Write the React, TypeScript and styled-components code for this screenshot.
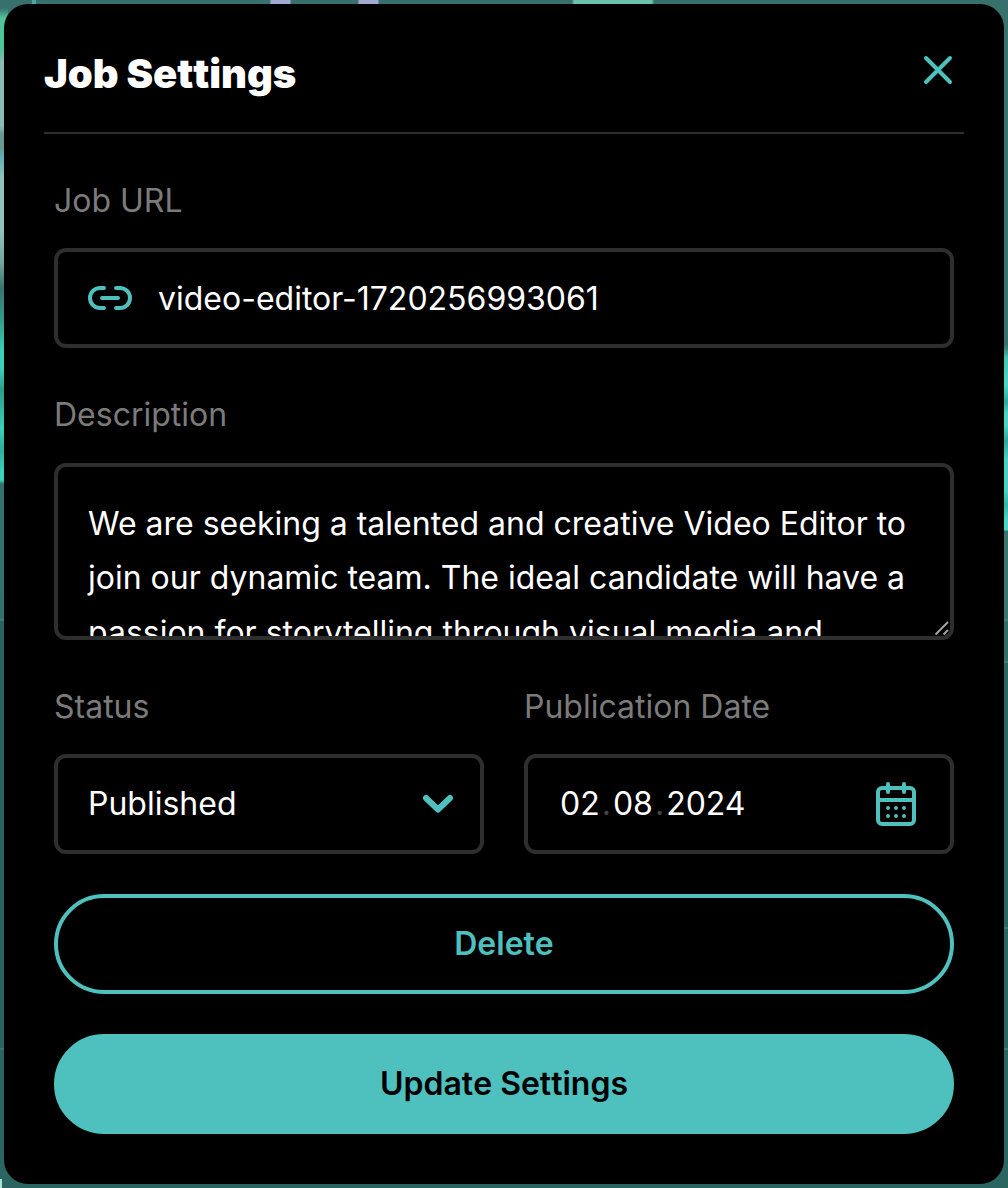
import React from "react";
import styled, { createGlobalStyle, css } from "styled-components";

const teal = "#4ec0be";
const line = "#2e2e2e";

const GlobalStyle = createGlobalStyle`
  *, *::before, *::after { box-sizing: border-box; }
  body { margin: 0; background: #2b6663; font-family: Inter, "Liberation Sans", sans-serif; }
`;

const Backdrop = styled.main`
  height: 1188px;
  padding: 4px;
  background:
    linear-gradient(#a9e3dc, #a9e3dc) 0 100% / 2px 9px no-repeat,
    linear-gradient(90deg, #38706c 0 32px, #4aa6a2 32px 36px, #38706c 36px 270px, #a3a9cf 271px 290px, #38706c 291px 358px, #a3a9cf 359px 378px, #38706c 379px 572px, #6cc0ae 574px 652px, #38706c 654px) 0 0 / 100% 4px no-repeat,
    linear-gradient(#38706c 0 8px, #4fc39a 18px 50px, #8cbab4 62px 126px, #6a9792 134px 148px, #5cacb4 155px, #8fc0ba 176px 232px, #76a49f 262px, #3a736d 288px, #319c8b 320px, #3bd0b8 352px 368px, #2d9c8b 390px, #3ad0b8 428px, #2fae9c 450px, #3bd2bb 472px 480px, #34716c 484px, #34706a 619px, #3e7e78 619px 621px, #2b6261 621px 1048px, #38736f 1048px 1050px, #2b6561 1050px) 0 0 / 8px 100% no-repeat,
    linear-gradient(#38706c 0 345px, #42c5b5 358px, #4bd4c4 385px, #2eaaa0 402px, #4bd4c4 414px 425px, #2eaaa0 441px, #47d3c1 460px 490px, #30b6aa 505px, #49d4c4 520px 530px, #3b736d 531px 619px, #478079 619px 621px, #316c65 621px 661px, #427c75 661px 663px, #2b6560 663px 927px, #427c75 927px 929px, #2b6560 929px 1048px, #427c75 1048px 1050px, #2b6560 1050px) 100% 0 / 8px 100% no-repeat,
    linear-gradient(#38706c 0 50%, #2b6561 50%);
`;

const Dialog = styled.section`
  height: 1180px;
  padding: 0 40px;
  border-radius: 24px;
  background: #000;
`;

const Header = styled.header`
  display: flex;
  justify-content: space-between;
  height: 130px;
  padding: 42px 10px 0 0;
  border-bottom: 2px solid ${line};
`;

const Title = styled.h1`
  margin: 0;
  color: #fff;
  font-size: 40px;
  font-weight: 900;
  line-height: 56px;
  font-kerning: none;
  letter-spacing: -0.04px;
`;

const IconButton = styled.button`
  display: flex;
  width: 32px;
  height: 48px;
  padding: 8px 0;
  border: 0;
  background: none;
  color: ${teal};
`;

const Form = styled.form`
  display: flex;
  flex-direction: column;
  padding: 0 10px;
`;

const Field = styled.div<{ $top: number; $gap: number }>`
  display: flex;
  flex: 1;
  flex-direction: column;
  gap: ${(p) => p.$gap}px;
  padding-top: ${(p) => p.$top}px;
`;

const Label = styled.label`
  color: #7b7b7b;
  font-size: 32px;
  line-height: 40px;
`;

const frame = css`
  border: 4px solid ${line};
  border-radius: 12px;
  color: #fff;
  font-size: 32px;
`;

const Control = styled.div<{ $pad: string }>`
  ${frame}
  display: flex;
  align-items: center;
  height: 100px;
  padding: ${(p) => p.$pad};
  white-space: nowrap;
`;

const Value = styled.span<{ $left?: number; $drop?: number }>`
  flex: 1;
  margin-left: ${(p) => p.$left ?? 0}px;
  padding-top: ${(p) => p.$drop ?? 0}px;
  line-height: 40px;
`;

const Separator = styled.span`
  padding: 0 2px;
  color: #444;
`;

const DescriptionBox = styled.div`
  position: relative;
  display: flex;
`;

const Description = styled.textarea`
  ${frame}
  width: 100%;
  height: 177px;
  padding: 30px;
  background: transparent;
  font-family: inherit;
  line-height: 54.4px;
  resize: none;
  overflow: hidden;
  outline: 0;
`;

const Grip = styled.svg`
  position: absolute;
  right: 4px;
  bottom: 4px;
`;

const Columns = styled.div`
  display: flex;
  gap: 40px;
`;

const Button = styled.button<{ $solid?: boolean }>`
  height: 100px;
  margin-top: 40px;
  border: 4px solid ${teal};
  border-radius: 50px;
  background: ${(p) => (p.$solid ? teal : "transparent")};
  color: ${(p) => (p.$solid ? "#000" : teal)};
  font: 600 32px/40px Inter, "Liberation Sans", sans-serif;
  font-kerning: none;
`;

const Icon = styled.svg<{ $stroke?: number }>`
  flex: none;
  fill: none;
  stroke: ${teal};
  stroke-width: ${(p) => p.$stroke ?? 4};
  stroke-linecap: round;
  stroke-linejoin: round;
`;

const CloseIcon = () => (
  <Icon width="32" height="32" viewBox="0 0 32 32">
    <path d="M4 4 28 28M28 4 4 28" />
  </Icon>
);

const LinkIcon = () => (
  <Icon width="44" height="24" viewBox="0 0 44 24">
    <path d="M16 2h-4a10 10 0 0 0 0 20h4M28 2h4a10 10 0 0 1 0 20h-4M14 12h16" />
  </Icon>
);

const ChevronIcon = () => (
  <Icon width="32" height="20" viewBox="0 0 32 20" $stroke={6}>
    <path d="M4 4 16 15.5 28 4" />
  </Icon>
);

const CalendarIcon = () => (
  <Icon width="40" height="44" viewBox="0 0 40 44">
    <rect x="2" y="6" width="36" height="36" rx="4" />
    <path d="M2 18h36M12 2v8M28 2v8" />
    <path d="M12 26h0M20 26h0M28 26h0M12 34h0M20 34h0M28 34h0" />
  </Icon>
);

export default function App() {
  return (
    <>
      <GlobalStyle />
      <Backdrop>
        <Dialog>
          <Header>
            <Title>Job Settings</Title>
            <IconButton aria-label="Close">
              <CloseIcon />
            </IconButton>
          </Header>
          <Form>
            <Field $top={47} $gap={27}>
              <Label>Job URL</Label>
              <Control $pad="0 30px">
                <LinkIcon />
                <Value $left={26} $drop={2}>video-editor-1720256993061</Value>
              </Control>
            </Field>
            <Field $top={47} $gap={28}>
              <Label>Description</Label>
              <DescriptionBox>
                <Description
                  spellCheck={false}
                  readOnly
                  value="We are seeking a talented and creative Video Editor to join our dynamic team. The ideal candidate will have a passion for storytelling through visual media and"
                />
                <Grip width="16" height="16" viewBox="0 0 16 16" stroke="#a5a5a5" strokeWidth="1.8">
                  <path d="M1.5 14.5 14 2M9.5 14.5 14 10" />
                </Grip>
              </DescriptionBox>
            </Field>
            <Columns>
              <Field $top={47} $gap={27}>
                <Label>Status</Label>
                <Control $pad="0 26px 0 30px">
                  <Value>Published</Value>
                  <ChevronIcon />
                </Control>
              </Field>
              <Field $top={47} $gap={27}>
                <Label>Publication Date</Label>
                <Control $pad="0 34px 0 32px">
                  <Value>
                    02<Separator>.</Separator>08<Separator>.</Separator>2024
                  </Value>
                  <CalendarIcon />
                </Control>
              </Field>
            </Columns>
            <Button type="button">Delete</Button>
            <Button type="button" $solid>
              Update Settings
            </Button>
          </Form>
        </Dialog>
      </Backdrop>
    </>
  );
}
